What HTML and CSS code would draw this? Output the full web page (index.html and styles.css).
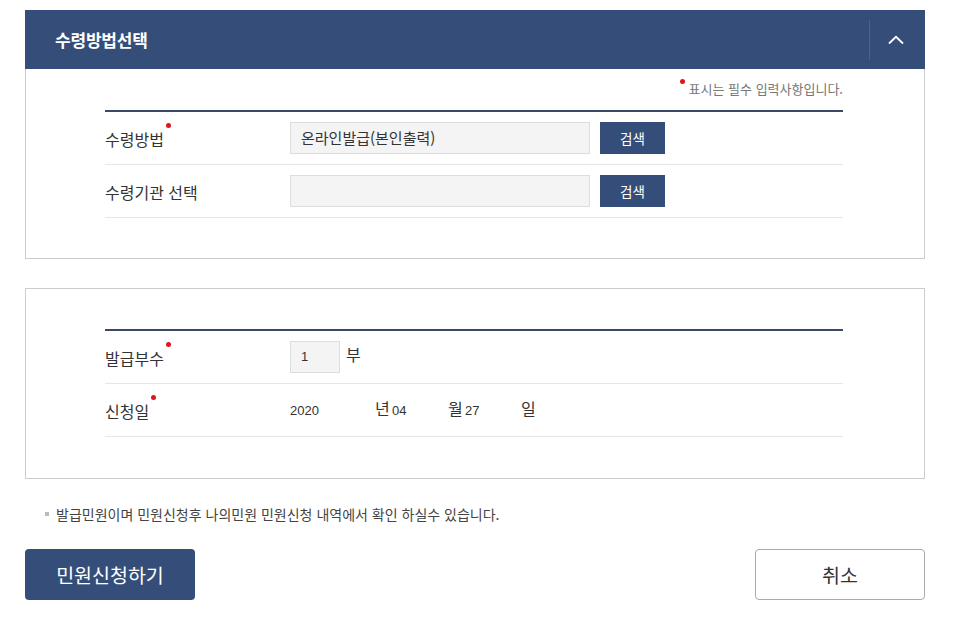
FILE: index.html
```html
<!DOCTYPE html>
<html lang="ko">
<head>
<meta charset="utf-8">
<title>수령방법선택</title>
<link rel="stylesheet" href="styles.css">
</head>
<body>
<div class="wrap">
  <section class="panel">
    <div class="panel-head">
      <h2 class="panel-title">수령방법선택</h2>
      <button class="toggle" type="button" aria-label="접기">
        <svg width="16" height="10" viewBox="0 0 16 10"><polyline points="1,8.5 8,1.8 15,8.5" fill="none" stroke="#fff" stroke-width="1.8"/></svg>
      </button>
    </div>
    <div class="panel-body">
      <p class="req-note"><span class="dot"></span>표시는 필수 입력사항입니다.</p>
      <div class="form-table">
        <div class="row">
          <div class="label">수령방법<span class="dot"></span></div>
          <div class="field">
            <div class="input wide">온라인발급(본인출력)</div>
            <button class="btn-search" type="button">검색</button>
          </div>
        </div>
        <div class="row">
          <div class="label">수령기관 선택</div>
          <div class="field">
            <div class="input wide"></div>
            <button class="btn-search" type="button">검색</button>
          </div>
        </div>
      </div>
    </div>
  </section>

  <section class="panel boxed">
    <div class="panel-body top">
      <div class="form-table">
        <div class="row">
          <div class="label">발급부수<span class="dot"></span></div>
          <div class="field">
            <div class="input small">1</div>
            <span class="unit">부</span>
          </div>
        </div>
        <div class="row">
          <div class="label">신청일<span class="dot"></span></div>
          <div class="field date">
            <span class="num year">2020</span><span class="unit">년</span>
            <span class="num md">04</span><span class="unit">월</span>
            <span class="num md">27</span><span class="unit">일</span>
          </div>
        </div>
      </div>
    </div>
  </section>

  <p class="info"><span class="sq"></span>발급민원이며 민원신청후 나의민원 민원신청 내역에서 확인 하실수 있습니다.</p>

  <div class="actions">
    <button class="btn primary" type="button">민원신청하기</button>
    <button class="btn ghost" type="button">취소</button>
  </div>
</div>
</body>
</html>
```

FILE: styles.css
```css
* { box-sizing: border-box; }
html, body { margin: 0; padding: 0; background: #fff; }
body {
  font-family: "Noto Sans CJK KR", "Noto Sans", "Liberation Sans", sans-serif;
  color: #333;
}
.wrap {
  width: 900px;
  margin: 10px 0 0 25px;
}
.panel-head {
  height: 59px;
  background: #354e79;
  display: flex;
  align-items: center;
  justify-content: space-between;
  padding-left: 30px;
}
.panel-title {
  margin: 0;
  color: #fff;
  font-size: 17px;
  font-weight: 700;
  letter-spacing: -0.2px;
}
.toggle {
  width: 56px;
  height: 40px;
  border: 0;
  border-left: 1px solid #4b6390;
  background: transparent;
  display: flex;
  align-items: center;
  justify-content: center;
  padding: 0 4px 0 0;
}
.panel-body {
  border: 1px solid #ccc;
  border-top: 0;
  padding: 8px 81px 40px 79px;
}
.panel.boxed { margin-top: 29px; }
.panel-body.top {
  border-top: 1px solid #ccc;
  padding-top: 40px;
  padding-bottom: 41px;
}
.req-note {
  margin: 0 0 9px;
  text-align: right;
  font-size: 13px;
  color: #777;
  line-height: 24px;
}
.dot {
  display: inline-block;
  width: 5px;
  height: 5px;
  border-radius: 50%;
  background: #e0141e;
  vertical-align: top;
  margin: 4px 3px 0 2px;
}
.req-note .dot { margin: 2px 4px 0 0; }
.form-table { border-top: 2px solid #3b4a63; }
.row {
  display: flex;
  align-items: center;
  height: 53px;
  border-bottom: 1px solid #e6e6e6;
}
.label {
  width: 185px;
  font-size: 16px;
  color: #333;
  padding-top: 2px;
  line-height: 22px;
}
.label .dot { margin-top: -5px; }
.field {
  display: flex;
  align-items: center;
  gap: 10px;
}
.input {
  height: 32px;
  background: #f4f4f4;
  border: 1px solid #ddd;
  font-size: 15px;
  line-height: 30px;
  padding-left: 10px;
  color: #333;
}
.input.wide { width: 300px; }
.input.small {
  width: 50px;
  font-family: "Liberation Sans", Arial, sans-serif;
  font-size: 13px;
}
.btn-search {
  width: 65px;
  height: 32px;
  border: 0;
  background: #354e79;
  color: #fff;
  font-family: inherit;
  font-size: 13.5px;
  padding: 0;
}
.unit {
  font-size: 16px;
  color: #333;
  margin-top: -6px;
}
.field .unit { margin-left: -4px; }
.field.date { gap: 0; }
.field.date .unit { margin: -4px 0 0; width: 17px; }
.num {
  font-family: "Liberation Sans", Arial, sans-serif;
  font-size: 13px;
  color: #333;
}
.num.year { width: 85px; }
.num.md { width: 56px; }
.info {
  margin: 25px 0 0 20px;
  font-size: 14px;
  color: #444;
  display: flex;
  align-items: center;
}
.sq {
  width: 4px;
  height: 4px;
  background: #bbb;
  margin-right: 7px;
}
.actions {
  margin-top: 25px;
  display: flex;
  justify-content: space-between;
}
.btn {
  width: 170px;
  height: 51px;
  border-radius: 4px;
  font-family: inherit;
  font-size: 19.5px;
  padding: 0;
}
.btn.primary {
  background: #354e79;
  color: #fff;
  border: 0;
}
.btn.ghost {
  background: #fff;
  color: #333;
  border: 1px solid #aaa;
}
```
